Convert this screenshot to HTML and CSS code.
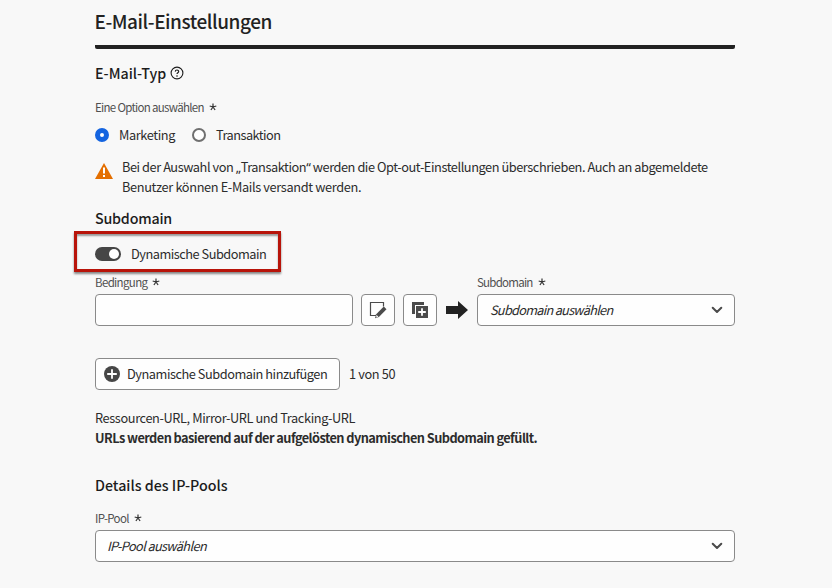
FILE: index.html
```html
<!DOCTYPE html>
<html lang="de">
<head>
<meta charset="utf-8">
<title>E-Mail-Einstellungen</title>
<link rel="stylesheet" href="styles.css">
</head>
<body>
<main class="settings">
  <h1 class="title">E-Mail-Einstellungen</h1>
  <h2 class="heading type-heading">E-Mail-Typ
    <svg class="help" viewBox="0 0 14 14"><circle cx="7" cy="7" r="5.9" fill="none" stroke="currentColor" stroke-width="1.1"/><path d="M5.2 5.6C5.3 3.5 8.8 3.6 8.7 5.6 8.6 6.8 7 6.8 7 8.1" fill="none" stroke="currentColor" stroke-width="1.1"/><circle cx="7" cy="10" r=".8" fill="currentColor"/></svg>
  </h2>
  <div class="label option-label">Eine Option auswählen<svg class="star" viewBox="0 0 8 8"><path d="M4 4V.5M4 4l3.3-1M4 4l2.1 3M4 4L1.9 7M4 4L.7 3"/></svg></div>
  <div class="radios">
    <span class="radio checked"></span><span class="marketing">Marketing</span>
    <span class="radio"></span><span class="transaction">Transaktion</span>
  </div>
  <div class="warning">
    <svg class="alert" viewBox="0 0 18 16"><path d="M9 0L18 16H0z" fill="#e46f00"/><path d="M8 4.6h2v6H8zM8 12h2v2H8z" fill="#fff"/></svg>
    <p>Bei der Auswahl von <span class="quote">„</span>Transaktion<span class="quote">“</span> werden die Opt-out-Einstellungen überschrieben. Auch an abgemeldete<br><span class="second-line">Benutzer können E-Mails versandt werden.</span></p>
  </div>
  <h2 class="heading sub-heading">Subdomain</h2>
  <div class="toggle-row"><span class="toggle"></span><span>Dynamische Subdomain</span></div>
  <div class="rule">
    <div class="field condition">
      <div class="label">Bedingung<svg class="star" viewBox="0 0 8 8"><path d="M4 4V.5M4 4l3.3-1M4 4l2.1 3M4 4L1.9 7M4 4L.7 3"/></svg></div>
      <div class="box"></div>
    </div>
    <div class="box icon-button"><svg width="18" height="18" viewBox="0 0 18 18"><path d="M7 14.5H1.5v-13h13v4" fill="none" stroke="#4b4b4b" stroke-width="1.2"/><path d="M6 17.2l1.2-4 7.6-7.6 2.7 2.7-7.6 7.6z" fill="#4b4b4b"/><path d="M7.4 13.7l2 2-2.1.7z" fill="#fff"/></svg></div>
    <div class="box icon-button"><svg width="18" height="18" viewBox="0 0 18 18"><path d="M1 1h12v3H4v9H1z" fill="#4b4b4b"/><path d="M5 5h12v12H5z" fill="#4b4b4b"/><path d="M11 7.2v7.6M7.2 11h7.6" stroke="#fff" stroke-width="1.8"/></svg></div>
    <svg class="arrow" viewBox="0 0 22 18"><path d="M0 5h12V0l10 9-10 9v-5H0z" fill="#222"/></svg>
    <div class="field target">
      <div class="label target-label">Subdomain<svg class="star" viewBox="0 0 8 8"><path d="M4 4V.5M4 4l3.3-1M4 4l2.1 3M4 4L1.9 7M4 4L.7 3"/></svg></div>
      <div class="box select">Subdomain auswählen<svg class="chevron" viewBox="0 0 12 8"><path d="M1.7 1.7L6 6l4.3-4.3"/></svg></div>
    </div>
  </div>
  <div class="add-row">
    <div class="box add"><svg width="16" height="16" viewBox="0 0 16 16"><circle cx="8" cy="8" r="8" fill="#464646"/><path d="M8 3.2v9.6M3.2 8h9.6" stroke="#fff" stroke-width="1.8"/></svg><span>Dynamische Subdomain hinzufügen</span></div>
    <span class="count">1 von 50</span>
  </div>
  <p class="urls">Ressourcen-URL, Mirror-URL und Tracking-URL<br><b>URLs werden basierend auf der aufgelösten dynamischen Subdomain gefüllt.</b></p>
  <h2 class="heading pool-heading">Details des IP-Pools</h2>
  <div class="field pool">
    <div class="label">IP-Pool<svg class="star" viewBox="0 0 8 8"><path d="M4 4V.5M4 4l3.3-1M4 4l2.1 3M4 4L1.9 7M4 4L.7 3"/></svg></div>
    <div class="box select pool-select">IP-Pool auswählen<svg class="chevron" viewBox="0 0 12 8"><path d="M1.7 1.7L6 6l4.3-4.3"/></svg></div>
  </div>
</main>
</body>
</html>
```
FILE: styles.css
```css
* { box-sizing: border-box; }
body { margin: 0; background: #f8f8f8; color: #2c2c2c; font: 12.75px/20px "Noto Sans CJK SC", "Noto Sans", sans-serif; letter-spacing: -0.38px; white-space: nowrap; }
h1, h2, p { margin: 0; }
svg { flex: none; }
.settings { width: 640px; margin-left: 95px; display: flex; flex-direction: column; }
.title { height: 49px; padding-top: 7px; border-bottom: 4px solid #222; border-radius: 2px; font-size: 19px; line-height: 28px; font-weight: 500; letter-spacing: -0.45px; text-indent: -0.5px; color: #222; }
.heading { font-size: 14.25px; line-height: 20px; font-weight: 500; letter-spacing: 0; color: #1c1c1c; }
.type-heading { margin-top: 14px; display: flex; align-items: center; gap: 4px; }
.help { width: 14px; height: 14px; }
.label { height: 16px; display: flex; align-items: center; gap: 5px; font-size: 11.5px; line-height: 16px; letter-spacing: -0.65px; color: #505050; }
.target-label { letter-spacing: -0.75px; }
.star { width: 8px; height: 8px; fill: none; stroke: #333; stroke-width: 1.2; }
.option-label { margin-top: 16px; letter-spacing: -0.7px; }
.radios { height: 20px; margin-top: 10px; display: flex; align-items: center; }
.radio { flex: none; width: 14px; height: 14px; border: 2px solid #707070; border-radius: 50%; background: #fff; }
.radio.checked { border: 5px solid #1464e0; }
.marketing { width: 57px; margin: 0 16px 0 10px; letter-spacing: -0.38px; }
.transaction { margin-left: 10px; letter-spacing: -0.52px; }
.warning { margin-top: 12px; height: 40px; display: flex; gap: 9px; letter-spacing: -0.43px; }
.second-line { letter-spacing: -0.35px; }
.quote { font-family: "Noto Sans", sans-serif; line-height: 1; }
.alert { width: 18px; height: 16px; margin-top: 6px; }
.sub-heading { margin-top: 11px; letter-spacing: -0.2px; }
.toggle-row { width: 207px; height: 41px; margin: 3px 0 0 -21px; border: 3px solid #b8140a; padding-left: 18px; display: flex; align-items: center; gap: 10px; box-shadow: 0 2px 2px #888, inset 0 2px 2px #999; letter-spacing: -0.48px; }
.toggle-row span { position: relative; top: 2px; }
.toggle { width: 26px; height: 14px; border-radius: 7px; background: #464646; padding: 2px; display: flex; justify-content: flex-end; }
.toggle::after { content: ""; width: 10px; height: 10px; border-radius: 50%; background: #fff; }
.rule { margin-top: 2px; display: flex; align-items: flex-end; }
.box { height: 32px; border: 1px solid #8a8a8a; border-radius: 4px; background: #fefefe; display: flex; align-items: center; }
.field .label { margin-bottom: 4px; }
.condition { width: 258px; }
.icon-button { width: 34px; margin-left: 8px; justify-content: center; }
.arrow { width: 22px; height: 18px; margin: 0 9px 7px; }
.target { width: 258px; }
.select { padding: 0 11px 0 12px; justify-content: space-between; font-style: italic; letter-spacing: -0.73px; }
.pool-select { padding-left: 11px; letter-spacing: -0.63px; }
.chevron { width: 12px; height: 8px; fill: none; stroke: #4b4b4b; stroke-width: 2; stroke-linecap: round; stroke-linejoin: round; }
.add-row { margin-top: 32px; display: flex; align-items: center; gap: 9px; }
.add { width: 245px; padding-left: 8px; gap: 7px; letter-spacing: -0.45px; }
.count { letter-spacing: -0.35px; }
.urls { margin-top: 18px; }
.urls b { letter-spacing: -0.55px; }
.pool-heading { margin-top: 27px; }
.pool { margin-top: 15px; }
```
